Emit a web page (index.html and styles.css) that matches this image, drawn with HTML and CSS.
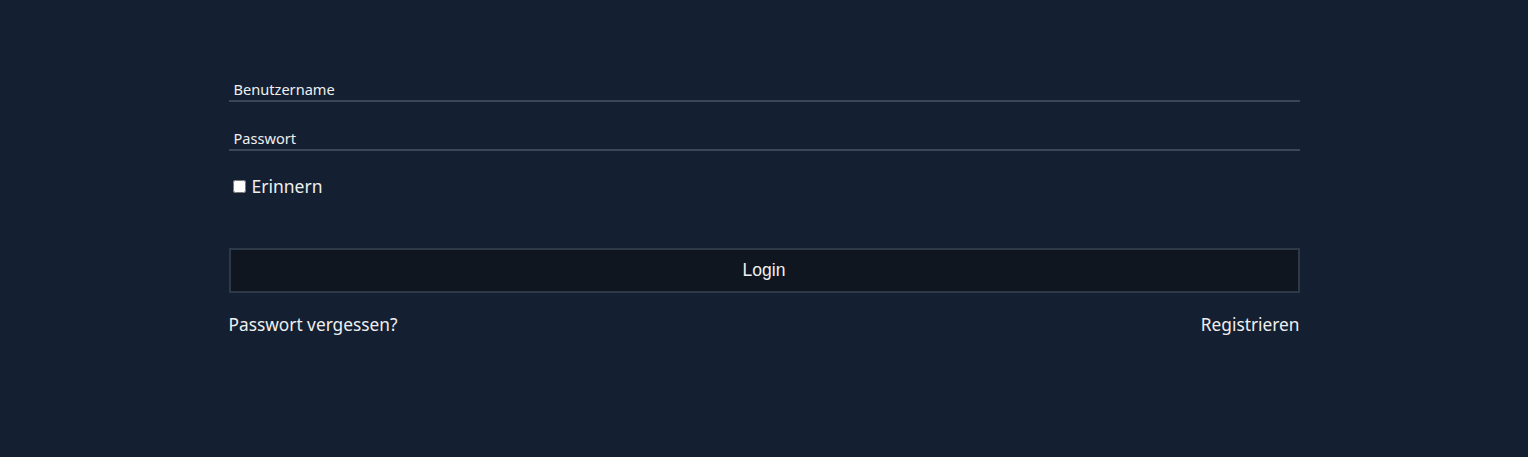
FILE: index.html
```html
<!DOCTYPE html>
<html lang="de">
<head>
<meta charset="utf-8">
<title>Login</title>
<link rel="stylesheet" href="styles.css">
</head>
<body>
<main class="page">
  <form class="login">
    <div class="field"><input class="text-input" type="text" placeholder="Benutzername"></div>
    <div class="field"><input class="text-input" type="password" placeholder="Passwort"></div>
    <label class="remember"><input type="checkbox" class="check"> Erinnern</label>
    <button type="button" class="btn">Login</button>
    <div class="links">
      <a class="link" href="#">Passwort vergessen?</a>
      <a class="link" href="#">Registrieren</a>
    </div>
  </form>
</main>
</body>
</html>
```
FILE: styles.css
```css
html, body {
  margin: 0;
  padding: 0;
  background: #142032;
  height: 100%;
}
body {
  font-family: "Noto Sans", "Open Sans", sans-serif;
  color: #ececec;
}
.page {
  display: flex;
  justify-content: center;
  padding-top: 78px;
}
.login {
  width: 1071px;
  display: flex;
  flex-direction: column;
}
.field {
  margin-bottom: 25px;
}
.field:nth-child(2) {
  margin-bottom: 0;
}
.text-input {
  display: block;
  width: 100%;
  box-sizing: border-box;
  height: 24px;
  padding: 0 5px;
  background: transparent;
  border: none;
  border-bottom: 2px solid #3b4657;
  font-family: "Noto Sans", sans-serif;
  font-size: 14.6px;
  color: #efefef;
  outline: none;
}
.text-input::placeholder {
  color: #efefef;
  opacity: 1;
}
.remember {
  display: flex;
  align-items: center;
  margin-top: 23px;
  font-size: 17.5px;
  color: #efefef;
  gap: 3px;
}
.check {
  margin: 3px 3px 3px 4px;
  width: 13px;
  height: 13px;
}
.btn {
  margin-top: 50px;
  height: 45px;
  width: 1071px;
  background: #10161f;
  border: 2px solid #2e3947;
  color: #efefef;
  font-family: "Liberation Sans", Arial, sans-serif;
  font-size: 17.5px;
  cursor: pointer;
}
.links {
  display: flex;
  justify-content: space-between;
  margin-top: 20px;
}
.link {
  color: #efefef;
  text-decoration: none;
  font-size: 17.3px;
}
```
